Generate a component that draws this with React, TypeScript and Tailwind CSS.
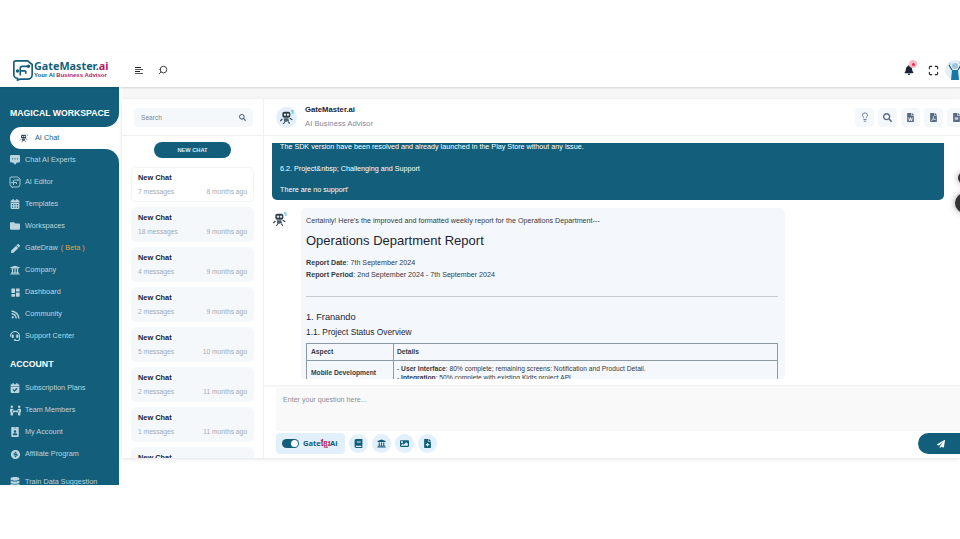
import React from 'react';
import { Maximize, Lightbulb, Search } from 'lucide-react';
import {
  FaBell, FaBook, FaCalendarAlt, FaCalendarCheck, FaDatabase, FaFileAlt, FaFileMedical,
  FaFilePdf, FaFileWord, FaFolder, FaHeadset, FaIdBadge, FaImage, FaPaperPlane, FaPen, FaPeopleArrows,
  FaRss, FaSearch, FaUniversity,
} from 'react-icons/fa';
import { BiSolidDashboard } from 'react-icons/bi';
import { BsChatSquareDotsFill } from 'react-icons/bs';
import { RiMoneyDollarCircleFill } from 'react-icons/ri';

const Robot = ({ size = 16 }: { size?: number }) => (
  <svg width={size} height={size} viewBox="0 0 24 24">
    <rect x="5" y="4" width="12" height="9" rx="3" fill="#2f3b45" />
    <circle cx="9" cy="8.5" r="1.8" fill="#cfe6f0" />
    <circle cx="13.5" cy="8.5" r="1.8" fill="#cfe6f0" />
    <path d="M7 14h7l1 4-7 2z" fill="#47606f" />
    <path d="M5 15 2 18M16 14l4 2M9 20l-3 2M14 19l2 3" stroke="#2f3b45" strokeWidth="1.6" fill="none" />
    <path d="M18 3h4M19 6h3" stroke="#35a6d0" strokeWidth="1.5" />
  </svg>
);

const Logo = ({ size = 22 }: { size?: number }) => (
  <svg width={size} height={size} viewBox="0 0 24 24" fill="none" stroke="currentColor" strokeWidth="1.8">
    <path d="M4 2h13l5 4v11a5 5 0 0 1-5 5H9l-3 1v-2a4 4 0 0 1-4-4V4a2 2 0 0 1 2-2z" />
    <path d="M17 8h-6a2 2 0 0 0-2 2v3h6M9 13v5M15 13v3" />
    <circle cx="18" cy="8" r="1" />
    <circle cx="6" cy="13" r="1" />
  </svg>
);

const UserAvatar = () => (
  <svg width="20" height="20" viewBox="0 0 20 20">
    <circle cx="10" cy="10" r="10" fill="#e3eff6" />
    <circle cx="10" cy="6" r="3" fill="#9cc6dc" />
    <path d="M7 10h6l1 10H6z" fill="#1877a8" />
    <path d="M7 10 4 5M13 10l3-5" stroke="#24516b" strokeWidth="1.2" />
    <circle cx="5" cy="4" r="0.8" fill="#7fb5d1" />
    <circle cx="15" cy="3" r="0.8" fill="#7fb5d1" />
  </svg>
);

const workspaceItems = [
  { icon: <BsChatSquareDotsFill size={10} />, label: 'Chat AI Experts' },
  { icon: <Logo size={12} />, label: 'AI Editor' },
  { icon: <FaCalendarAlt size={10} />, label: 'Templates' },
  { icon: <FaFolder size={10} />, label: 'Workspaces' },
  { icon: <FaPen size={9} />, label: 'GateDraw', beta: true },
  { icon: <FaUniversity size={10} />, label: 'Company' },
  { icon: <BiSolidDashboard size={11} />, label: 'Dashboard' },
  { icon: <FaRss size={9} />, label: 'Community' },
  { icon: <FaHeadset size={10} />, label: 'Support Center' },
];

const accountItems = [
  { icon: <FaCalendarCheck size={10} />, label: 'Subscription Plans' },
  { icon: <FaPeopleArrows size={11} />, label: 'Team Members' },
  { icon: <FaIdBadge size={10} />, label: 'My Account' },
  { icon: <RiMoneyDollarCircleFill size={11} />, label: 'Affiliate Program' },
];

const chats = [
  ['7 messages', '8 months ago'],
  ['18 messages', '9 months ago'],
  ['4 messages', '9 months ago'],
  ['2 messages', '9 months ago'],
  ['5 messages', '10 months ago'],
  ['2 messages', '11 months ago'],
  ['1 messages', '11 months ago'],
  ['3 messages', '11 months ago'],
];

const NavRow = ({ icon, label, beta }: { icon: React.ReactNode; label: string; beta?: boolean }) => (
  <div className="flex h-[22px] items-center pl-[9px] text-[7.3px] text-[#bcd4de]">
    <span className="flex w-[12px] items-center justify-center text-[#bcd4de]">{icon}</span>
    <span className="ml-[4px] whitespace-nowrap">{label}</span>
    {beta && <span className="ml-[3px] whitespace-nowrap text-[#e0a04a]">( Beta )</span>}
  </div>
);

const ToolButton = ({ children }: { children: React.ReactNode }) => (
  <button className="flex h-[19px] w-[19px] shrink-0 items-center justify-center rounded-[4px] bg-[#f4f8fb] text-[#5b6b85]">
    {children}
  </button>
);

const RoundButton = ({ children }: { children: React.ReactNode }) => (
  <button className="flex h-[19px] w-[19px] items-center justify-center rounded-full bg-[#e1f0fb] text-[#135f7b]">
    {children}
  </button>
);

export default function App() {
  return (
    <div className="relative h-[539px] w-[960px] overflow-hidden bg-white pt-[53px] font-['Liberation_Sans',Arial,sans-serif] antialiased">
      {/* top bar */}
      <header className="relative z-10 flex h-[34px] items-center shadow-[0_1px_2px_rgba(0,0,0,0.15)]">
        <div className="ml-[12px] flex w-[123px] items-center text-[#135f7b]">
          <Logo />
          <div className="-mt-[2px] leading-none">
            <div className="font-['Noto_Sans',sans-serif] text-[10.8px] font-bold leading-[12px] text-[#135f7b]">
              GateMaster.<span className="text-[#b5175f]">ai</span>
            </div>
            <div className="-mt-[1px] whitespace-nowrap text-[6px] font-bold leading-[8px] text-[#135f7b]">
              Your AI <span className="text-[#b5175f]">Business Advisor</span>
            </div>
          </div>
        </div>
        <div className="flex w-[8px] flex-col gap-[1px]">
          <span className="h-[1px] w-[6px] bg-[#222]" />
          <span className="h-[1px] w-[8px] bg-[#555]" />
          <span className="h-[1px] w-[5px] bg-[#222]" />
          <span className="h-[1px] w-[8px] bg-[#555]" />
        </div>
        <Search size={10} strokeWidth={2} className="ml-[15px] -scale-x-100 text-[#222]" />
        <div className="ml-auto flex items-center">
          <div className="relative mr-[14px]">
            <FaBell size={10} className="text-[#1c2434]" />
            <span className="absolute -right-[3px] -top-[5px] flex h-[8px] w-[8px] items-center justify-center rounded-full bg-[#f9b9c8]">
              <span className="h-[3px] w-[3px] rounded-full bg-[#ef2b52]" />
            </span>
          </div>
          <Maximize size={11} strokeWidth={2.4} className="mr-[6px] text-[#222]" />
          <div className="-mr-[5px] h-[20px] w-[20px]">
            <UserAvatar />
          </div>
        </div>
      </header>

      <div className="flex h-[398px]">
        {/* sidebar */}
        <aside className="h-full w-[119px] shrink-0 overflow-hidden bg-white">
          <div className="flex h-[40px] items-end rounded-br-[14px] bg-[#135f7b] pb-[7px] pl-[10px] text-[8.7px] font-bold whitespace-nowrap text-white">
            MAGICAL WORKSPACE
          </div>
          <div className="bg-[#135f7b] pl-[10px]">
            <div className="flex h-[22px] items-center rounded-l-full bg-white pl-[9px] text-[7.3px] text-[#135f7b]">
              <Robot size={10} />
              <span className="ml-[6px]">AI Chat</span>
            </div>
          </div>
          <div className="h-full rounded-tr-[14px] bg-[#135f7b]">
            {workspaceItems.map(item => (
              <NavRow key={item.label} icon={item.icon} label={item.label} beta={item.beta} />
            ))}
            <div className="flex h-[30px] items-end pb-[6px] pl-[10px] text-[8.7px] font-bold text-white">ACCOUNT</div>
            {accountItems.map(item => (
              <NavRow key={item.label} icon={item.icon} label={item.label} />
            ))}
            <div className="mt-[6px]">
              <NavRow icon={<FaDatabase size={10} />} label="Train Data Suggestion" />
            </div>
          </div>
        </aside>

        {/* chat panel */}
        <div className="ml-[3px] flex min-w-0 flex-1 flex-col">
          <div className="h-[12px] shrink-0 bg-[#f7f7f7]" />
          <div className="flex h-[359px] shrink-0 bg-white shadow-[0_1px_4px_rgba(0,0,0,0.12)]">
            <div className="flex w-[142px] shrink-0 flex-col border-r border-[#eef1f4]">
              <div className="border-b border-[#eef1f4] px-[12px] pt-[9px] pb-[8px]">
                <div className="flex h-[19px] w-[119px] items-center justify-between rounded-[4px] bg-[#f5f8fb] px-[7px] text-[6.6px] text-[#7a8597]">
                  Search
                  <FaSearch size={7} className="text-[#5b6b85]" />
                </div>
              </div>
              <div className="flex justify-center pt-[6px]">
                <button className="h-[16px] w-[77px] rounded-full bg-[#135f7b] text-[5.7px] font-bold text-[#dcebf1]">NEW CHAT</button>
              </div>
              <div className="mt-[9px] flex min-h-0 flex-1 flex-col gap-[5px] overflow-hidden px-[9px]">
                {chats.map(([count, time], i) => (
                  <div
                    key={i}
                    className={`h-[35px] shrink-0 rounded-[5px] border px-[6px] pt-[5px] ${i === 0 ? 'border-[#f1f5f8] bg-white' : 'border-[#f5f8fb] bg-[#f5f8fb]'}`}
                  >
                    <div className="text-[7.4px] leading-[10px] font-bold text-[#1c2434]">New Chat</div>
                    <div className="mt-[4px] flex justify-between text-[6.7px] leading-[9px] text-[#a3a9b3]">
                      <span>{count}</span>
                      <span>{time}</span>
                    </div>
                  </div>
                ))}
              </div>
            </div>

            <div className="flex min-w-0 flex-1 flex-col">
              <div className="flex h-[37px] shrink-0 items-center border-b border-[#eef1f4] pl-[12px]">
                <div className="flex h-[21px] w-[21px] items-center justify-center rounded-full bg-[#e3f0fa]">
                  <Robot size={16} />
                </div>
                <div className="ml-[8px]">
                  <div className="text-[7.7px] leading-[10px] font-bold text-[#1c2434]">GateMaster.ai</div>
                  <div className="mt-[4px] text-[7.7px] leading-[10px] text-[#7f8a9c]">AI Business Advisor</div>
                </div>
                <div className="-mr-[6px] ml-auto flex gap-[4px]">
                  <ToolButton><Lightbulb size={10} /></ToolButton>
                  <ToolButton><FaSearch size={9} /></ToolButton>
                  <ToolButton><FaFileWord size={9} /></ToolButton>
                  <ToolButton><FaFilePdf size={9} /></ToolButton>
                  <ToolButton><FaFileAlt size={9} /></ToolButton>
                </div>
              </div>

              {/* messages */}
              <div className="mt-[7px] h-[236px] shrink-0 overflow-hidden pl-[8px]">
                <div className="h-[57px] w-[672px] overflow-hidden rounded-b-[5px] bg-[#135f7b] pl-[8px] text-[7.2px] text-white">
                  <div className="-mt-[1px] leading-[10px]">The SDK version have been resolved and already launched in the Play Store without any issue.</div>
                  <div className="mt-[12px] leading-[10px]">6.2. Project&amp;nbsp; Challenging and Support</div>
                  <div className="mt-[11px] leading-[10px]">There are no support'</div>
                </div>
                <div className="mt-[8px] flex">
                  <div className="pt-[3px]"><Robot size={16} /></div>
                  <div className="ml-[13px] h-[172px] w-[484px] rounded-[5px] bg-[#f4f8fc] pt-[8px] pr-[7px] pl-[5px] text-[#333a44]">
                    <p className="text-[7.2px] leading-[10px]">Certainly! Here's the improved and formatted weekly report for the Operations Department---</p>
                    <h1 className="mt-[5px] text-[13px] leading-[20px] text-[#1c2434]">Operations Department Report</h1>
                    <p className="mt-[7px] text-[7.15px] leading-[10px]"><b>Report Date</b>: 7th September 2024</p>
                    <p className="mt-[2px] text-[7.15px] leading-[10px]"><b>Report Period</b>: 2nd September 2024 - 7th September 2024</p>
                    <hr className="mt-[16px] border-[#c9ced4]" />
                    <h2 className="mt-[14px] text-[9.2px] leading-[12px] text-[#1c2434]">1. Franando</h2>
                    <h3 className="mt-[3px] text-[8.4px] leading-[12px] text-[#1c2434]">1.1. Project Status Overview</h3>
                    <table className="mt-[5px] w-[472px] table-fixed border-collapse border border-[#8d9aa6] text-[6.7px]">
                      <tbody>
                        <tr className="h-[17px]">
                          <td className="w-[87px] border border-[#8d9aa6] pl-[4px] font-bold">Aspect</td>
                          <td className="border border-[#8d9aa6] pl-[3px] font-bold">Details</td>
                        </tr>
                        <tr>
                          <td className="border border-[#8d9aa6] pl-[4px] font-bold">Mobile Development</td>
                          <td className="border border-[#8d9aa6] px-[3px] py-[3px] leading-[9px]">
                            - <b>User Interface</b>: 80% complete; remaining screens: Notification and Product Detail.<br />
                            - <b>Integration</b>: 50% complete with existing Kidts project API.
                          </td>
                        </tr>
                      </tbody>
                    </table>
                  </div>
                </div>
              </div>

              {/* composer */}
              <div className="mt-[6px] flex min-h-0 flex-1 flex-col border-t-2 border-[#f4f4f4] pl-[12px]">
                <div className="mt-[1px] h-[43px] shrink-0 bg-[#f9f9f9] pl-[7px] pt-[7px] text-[7.1px] leading-[10px] text-[#8a8f98]">Enter your question here...</div>
                <div className="mt-[2px] flex items-center">
                  <div className="flex h-[21px] w-[69px] items-center rounded-[4px] bg-[#e1f0fb] pl-[6px]">
                    <span className="flex h-[9px] w-[17px] items-center justify-end rounded-full bg-[#135f7b] pr-[1px]">
                      <span className="h-[7px] w-[7px] rounded-full bg-white" />
                    </span>
                    <span className="ml-[4px] whitespace-nowrap font-['Noto_Sans',sans-serif] text-[7.6px] font-bold text-[#135f7b]">
                      Gate<span className="text-[#b5175f]">ខ្មែរ</span>Ai
                    </span>
                  </div>
                  <div className="ml-[4px] flex gap-[4px]">
                    <RoundButton><FaBook size={9} /></RoundButton>
                    <RoundButton><FaUniversity size={9} /></RoundButton>
                    <RoundButton><FaImage size={9} /></RoundButton>
                    <RoundButton><FaFileMedical size={9} /></RoundButton>
                  </div>
                  <button className="-mr-[10px] ml-auto flex h-[21px] w-[52px] shrink-0 items-center justify-center rounded-full bg-[#135f7b] pr-[6px] text-white">
                    <FaPaperPlane size={8} />
                  </button>
                </div>
              </div>
            </div>
          </div>
        </div>
      </div>

      {/* floating page buttons cut by the window edge */}
      <span className="absolute -right-[10px] top-[172px] h-[12px] w-[12px] rounded-full bg-[#333] shadow-[0_0_6px_rgba(0,0,0,0.4)]" />
      <span className="absolute -right-[15px] top-[193px] h-[20px] w-[20px] rounded-full bg-[#333] shadow-[0_0_6px_rgba(0,0,0,0.4)]" />
    </div>
  );
}
